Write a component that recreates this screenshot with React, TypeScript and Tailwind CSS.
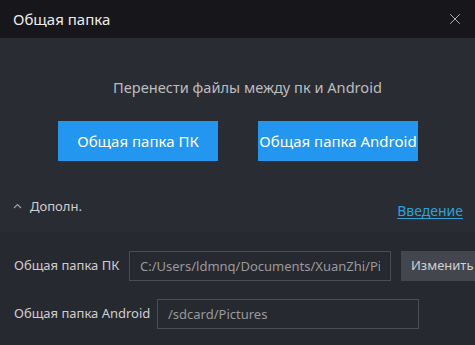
import { X } from 'lucide-react';

const font = { fontFamily: '"Segoe UI", "Noto Sans", "Liberation Sans", sans-serif' };

export default function App() {
    return (
        <div className="w-[475px] h-[345px] overflow-hidden bg-[#2a2c34] flex flex-col" style={font}>
            {/* title bar */}
            <div className="h-[38px] shrink-0 bg-[#17171b] flex items-center justify-between pl-[13px] pr-[11px]">
                <span className="text-[15px] text-[#ececec]">Общая папка</span>
                <X className="w-[18px] h-[18px] text-[#b5b5b5]" strokeWidth={1.3} />
            </div>

            {/* main */}
            <div className="h-[194px] shrink-0 flex flex-col">
                <div className="mt-[39px] text-center text-[14.6px] text-[#bdbdbd] pl-[20px]">
                    Перенести файлы между пк и Android
                </div>
                <div className="mt-[22px] flex gap-[40px] pl-[58px]">
                    <button className="w-[160px] h-[40px] bg-[#2397ef] text-white text-[15px]">Общая папка ПК</button>
                    <button className="w-[160px] h-[40px] bg-[#2397ef] text-white text-[15px] whitespace-nowrap">Общая папка Android</button>
                </div>
                <div className="mt-[39px] flex items-center justify-between pl-[13px] pr-[12px]">
                    <div className="flex items-center gap-[8px] text-[13px] text-[#cfcfcf] -mt-[8px]">
                        <svg width="9" height="6" viewBox="0 0 9 6" fill="none">
                            <path d="M1 5 L4.5 1.5 L8 5" stroke="#a0a0a0" strokeWidth="1.2" />
                        </svg>
                        Дополн.
                    </div>
                    <a className="text-[14px] text-[#2aa3d8] underline underline-offset-2">Введение</a>
                </div>
            </div>

            {/* settings */}
            <div className="flex-1 bg-[#272930] flex flex-col gap-[18px] pt-[19px] pl-[14px] text-[13px]">
                <div className="flex items-center">
                    <span className="w-[115px] shrink-0 text-[#cfcfcf]">Общая папка ПК</span>
                    <input
                        readOnly
                        value="C:/Users/ldmnq/Documents/XuanZhi/Pictures"
                        className="w-[262px] h-[30px] shrink-0 border border-[#4a4c55] bg-transparent px-[10px] text-[#9a9a9a] outline-none"
                    />
                    <button className="ml-[10px] h-[30px] w-[80px] shrink-0 bg-[#43464f] text-[#d0d0d0] text-left pl-[10px]">Изменить</button>
                </div>
                <div className="flex items-center">
                    <span className="w-[143px] shrink-0 text-[#cfcfcf]">Общая папка Android</span>
                    <input
                        readOnly
                        value="/sdcard/Pictures"
                        className="w-[262px] h-[30px] shrink-0 border border-[#4a4c55] bg-transparent px-[10px] text-[#9a9a9a] outline-none"
                    />
                </div>
            </div>
        </div>
    );
}
